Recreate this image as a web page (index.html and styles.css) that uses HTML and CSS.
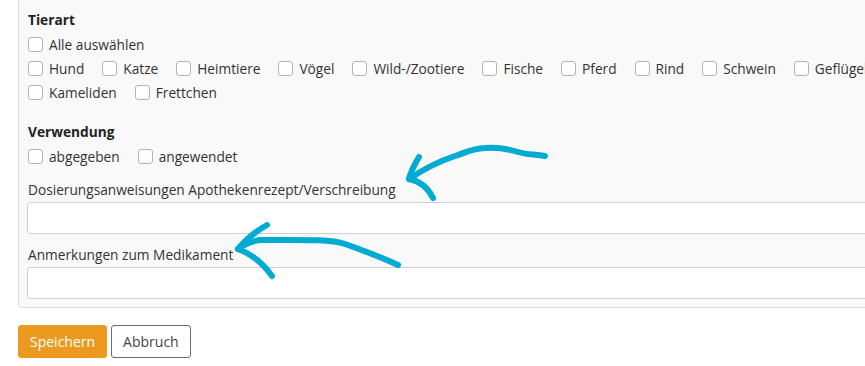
FILE: index.html
```html
<!DOCTYPE html>
<html>
<head>
  <meta charset="utf-8">
  <link rel="stylesheet" href="styles.css">
</head>
<body>
  <div id="page">
    <div class="panel">
      <div class="group">
        <div class="group-title">Tierart</div>
        <div class="check-row">
          <label class="check"><input type="checkbox"> Alle auswählen</label>
        </div>
        <div class="check-row">
          <label class="check"><input type="checkbox"> Hund</label>
          <label class="check"><input type="checkbox"> Katze</label>
          <label class="check"><input type="checkbox"> Heimtiere</label>
          <label class="check"><input type="checkbox"> Vögel</label>
          <label class="check"><input type="checkbox"> Wild-/Zootiere</label>
          <label class="check"><input type="checkbox"> Fische</label>
          <label class="check"><input type="checkbox"> Pferd</label>
          <label class="check"><input type="checkbox"> Rind</label>
          <label class="check"><input type="checkbox"> Schwein</label>
          <label class="check"><input type="checkbox"> Geflügel</label>
        </div>
        <div class="check-row">
          <label class="check"><input type="checkbox"> Kameliden</label>
          <label class="check"><input type="checkbox"> Frettchen</label>
        </div>
      </div>

      <div class="group">
        <div class="group-title">Verwendung</div>
        <div class="check-row">
          <label class="check"><input type="checkbox"> abgegeben</label>
          <label class="check"><input type="checkbox"> angewendet</label>
        </div>
      </div>

      <div class="field">
        <label class="field-label">Dosierungsanweisungen Apothekenrezept/Verschreibung</label>
        <input type="text" class="text-input">
      </div>

      <div class="field">
        <label class="field-label">Anmerkungen zum Medikament</label>
        <input type="text" class="text-input">
      </div>
    </div>

    <div class="actions">
      <button class="btn btn-save">Speichern</button>
      <button class="btn btn-cancel">Abbruch</button>
    </div>

    <!-- hand drawn annotation arrows -->
    <svg class="scribble" width="865" height="366" viewBox="0 0 865 366">
      <path d="M545 156 C535 154 527 155 518 152 C508 149 495 147 485 148 C470 149 465 153 455 156 C440 161 425 168 409 179" />
      <path d="M419 157 C415 164 411 170 409 179 C420 181 428 188 433 198" />
      <path d="M398 265 C385 259 365 251 345 244 C330 239 300 240 260 240 C252 241 245 244 238 249" />
      <path d="M267 225 C258 230 249 236 238 249 C252 254 262 262 272 276" />
    </svg>
  </div>
</body>
</html>
```

FILE: styles.css
```css
html, body {
  margin: 0;
  padding: 0;
  overflow: hidden;
}

body {
  background-color: #ffffff;
  font-family: 'Open Sans', 'Noto Sans', sans-serif;
  font-size: 13.7px;
  color: #212529;
}

#page {
  position: relative;
  width: 865px;
  height: 366px;
  padding: 0 0 0 18px;
  box-sizing: border-box;
}

.panel {
  width: 900px;
  background-color: #f9f9f9;
  border: 1px solid #dedede;
  border-top: none;
  border-radius: 0 0 4px 4px;
  padding: 8px 9px 8px 9px;
  box-sizing: border-box;
}

.group {
  margin-bottom: 16px;
}

.group:nth-child(2) {
  margin-bottom: 10px;
}

.group-title {
  font-weight: bold;
  line-height: 24px;
  color: #222;
}

.check-row {
  display: flex;
  white-space: nowrap;
}

.check {
  display: flex;
  align-items: center;
  height: 24px;
  margin-right: 18px;
  color: #333;
}

.check input {
  appearance: none;
  -webkit-appearance: none;
  width: 15px;
  height: 15px;
  margin: 0 6px 0 0;
  border: 1px solid #b4b4b4;
  border-radius: 3px;
  background-color: #ffffff;
  box-sizing: border-box;
}

.field {
  margin-bottom: 9px;
}

.field:last-child {
  margin-bottom: 0;
}

.field-label {
  display: block;
  line-height: 24px;
  color: #333;
}

.text-input {
  display: block;
  width: 100%;
  height: 32px;
  border: 1px solid #ced1d6;
  border-radius: 3px;
  background-color: #ffffff;
  box-sizing: border-box;
  margin-left: -1px;
}

.actions {
  display: flex;
  gap: 4px;
  margin-top: 17px;
}

.btn {
  height: 33px;
  font-family: 'Open Sans', 'Noto Sans', sans-serif;
  font-size: 14px;
  border-radius: 3px;
  padding: 0 11px;
  cursor: pointer;
}

.btn-save {
  background-color: #eb9a1f;
  border: 1px solid #eb9a1f;
  color: #ffffff;
}

.btn-cancel {
  background-color: #ffffff;
  border: 1px solid #6b6b6b;
  color: #444;
}

.scribble {
  position: absolute;
  top: 0;
  left: 0;
  pointer-events: none;
}

.scribble path {
  fill: none;
  stroke: #02abd0;
  stroke-width: 6;
  stroke-linecap: round;
  stroke-linejoin: round;
}
```
